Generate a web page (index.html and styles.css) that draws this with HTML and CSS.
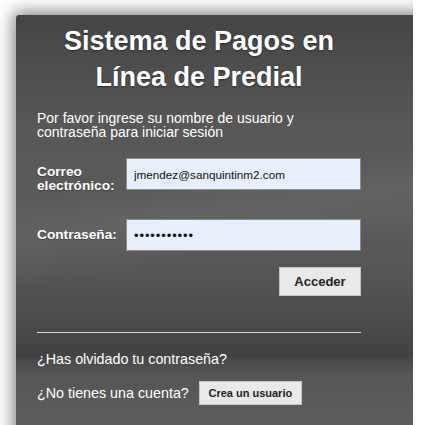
FILE: index.html
```html
<!DOCTYPE html>
<html lang="es">
<head>
<meta charset="utf-8">
<title>Sistema de Pagos en Línea de Predial</title>
<link rel="stylesheet" href="styles.css">
</head>
<body>
<div class="frame">
  <main class="panel">
    <div class="content">
      <h1 class="title">Sistema de Pagos en<br>Línea de Predial</h1>
      <p class="intro">Por favor ingrese su nombre de usuario y<br>contraseña para iniciar sesión</p>
      <form class="form">
        <div class="row row-email">
          <label class="label label-top" for="email">Correo<br>electrónico:</label>
          <input class="field" id="email" type="text" value="jmendez@sanquintinm2.com">
        </div>
        <div class="row row-pass">
          <label class="label" for="pass">Contraseña:</label>
          <input class="field field-pass" id="pass" type="password" value="12345678901">
        </div>
        <div class="actions">
          <button class="btn btn-main" type="button">Acceder</button>
        </div>
      </form>
      <hr class="rule">
      <p class="link">¿Has olvidado tu contraseña?</p>
      <div class="signup">
        <span class="link">¿No tienes una cuenta?</span>
        <button class="btn btn-small" type="button">Crea un usuario</button>
      </div>
    </div>
  </main>
</div>
</body>
</html>
```

FILE: styles.css
```css
html, body {
  margin: 0;
  padding: 0;
  background: #ffffff;
  font-family: "Liberation Sans", Arial, Helvetica, sans-serif;
}

.frame {
  width: 413px;
  height: 425px;
  overflow: hidden;
  padding-top: 15px;
  padding-left: 16px;
  box-sizing: border-box;
}

.panel {
  width: 430px;
  height: 440px;
  border-radius: 3px 0 0 0;
  box-shadow: 0 0 16px 4px rgba(0, 0, 0, 0.45);
  background:
    linear-gradient(172deg, rgba(255,255,255,0) 0%, rgba(255,255,255,0) 38%, rgba(255,255,255,0.05) 45%, rgba(255,255,255,0) 55%),
    linear-gradient(180deg, #444444 0px, #4d4d4d 50px, #575757 110px, #5c5c5c 200px, #555555 260px, #4a4a4a 310px, #424242 342px, #474747 343px, #565656 360px, #5c5c5c 400px, #606060 440px);
  color: #ffffff;
}

.content {
  width: 324px;
  margin-left: 21px;
  padding-top: 8px;
}

.title {
  margin: 0;
  font-size: 27px;
  line-height: 36px;
  font-weight: bold;
  text-align: center;
  text-shadow: 0 1px 2px rgba(0, 0, 0, 0.45);
}

.intro {
  margin: 15.5px 0 0;
  font-size: 14px;
  line-height: 14px;
}

.form {
  margin-top: 17.5px;
}

.row {
  display: flex;
  align-items: center;
}

.row-pass {
  margin-top: 27px;
}

.label {
  width: 89px;
  flex: none;
  font-size: 13.7px;
  line-height: 13.5px;
  font-weight: bold;
  text-shadow: 0 1px 1px rgba(0, 0, 0, 0.3);
}

.label-top {
  align-self: flex-start;
  padding-top: 9px;
}

.field {
  width: 236px;
  height: 32px;
  box-sizing: border-box;
  margin: 0;
  padding: 0 7px;
  border: 1px solid #8e8e8e;
  border-radius: 0;
  background: #e8effc;
  color: #111111;
  font-family: "Liberation Sans", Arial, sans-serif;
  font-size: 11.7px;
  outline: none;
}

.field-pass {
  font-size: 13px;
  letter-spacing: 0.9px;
}

.actions {
  display: flex;
  justify-content: flex-end;
  margin-top: 16px;
}

.btn {
  margin: 0;
  border: 1px solid #c4c4c4;
  border-radius: 0;
  background: #e9e9e9;
  color: #222222;
  font-family: "Liberation Sans", Arial, sans-serif;
  font-weight: bold;
  cursor: pointer;
}

.btn-main {
  width: 82px;
  height: 29px;
  font-size: 13px;
}

.btn-small {
  width: 103px;
  height: 24px;
  font-size: 11px;
  padding: 0;
}

.rule {
  margin: 36px 0 0;
  border: 0;
  height: 1px;
  background: #dcdcdc;
}

.link {
  font-size: 14.3px;
  line-height: 16px;
  color: #ffffff;
}

p.link {
  margin: 18px 0 0;
}

.signup {
  display: flex;
  align-items: center;
  gap: 10px;
  margin-top: 14px;
}
```
